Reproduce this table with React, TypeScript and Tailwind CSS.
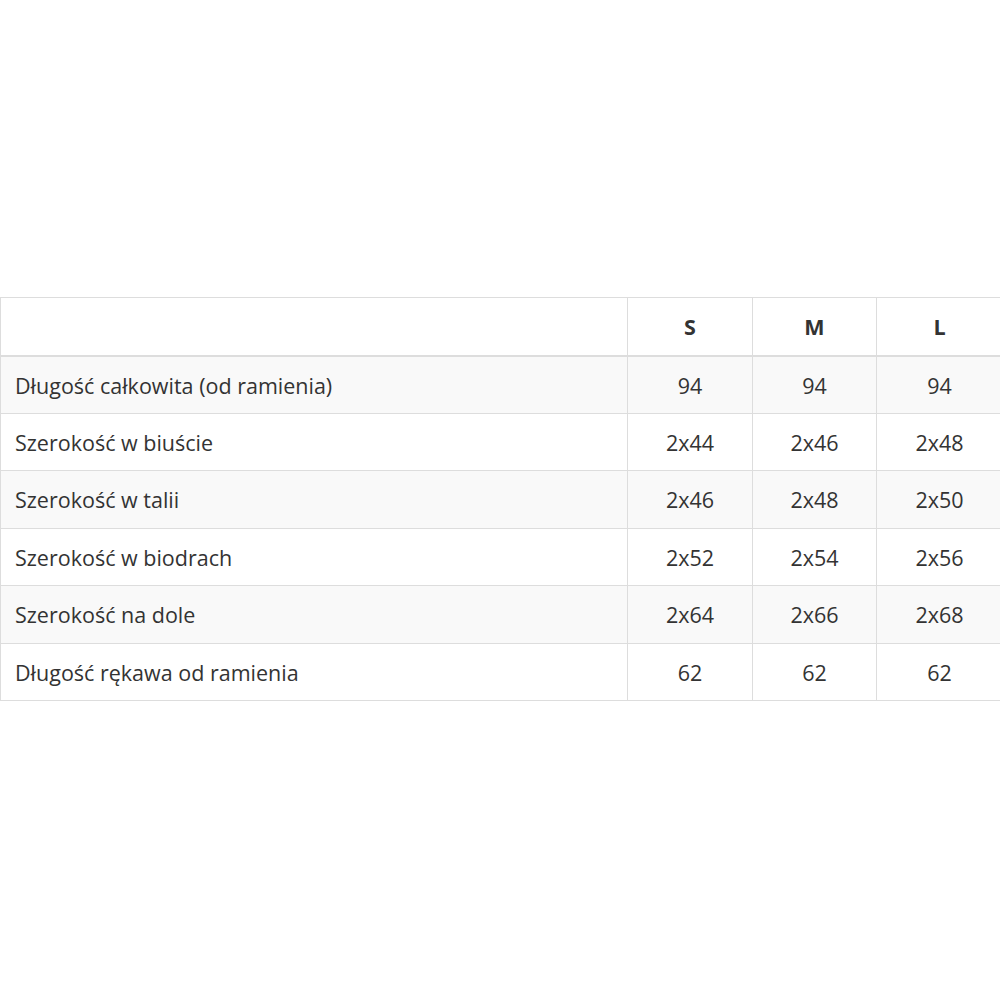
const sizes = ['S', 'M', 'L'];

const rows: [string, string[]][] = [
  ['Długość całkowita (od ramienia)', ['94', '94', '94']],
  ['Szerokość w biuście', ['2x44', '2x46', '2x48']],
  ['Szerokość w talii', ['2x46', '2x48', '2x50']],
  ['Szerokość w biodrach', ['2x52', '2x54', '2x56']],
  ['Szerokość na dole', ['2x64', '2x66', '2x68']],
  ['Długość rękawa od ramienia', ['62', '62', '62']],
];

export default function App() {
  return (
    <div className="w-[1000px] h-[1000px] bg-white overflow-hidden pt-[297px] font-['Open_Sans',sans-serif] text-[#333]">
      <table className="w-[1002px] table-fixed border-collapse text-[21.5px] leading-[28px]">
        <colgroup>
          <col className="w-[627px]" />
          <col className="w-[125px]" />
          <col className="w-[124px]" />
          <col className="w-[126px]" />
        </colgroup>
        <thead>
          <tr className="h-[58px]">
            <th className="border border-[#ddd] border-b-2" />
            {sizes.map((s) => (
              <th key={s} className="border border-[#ddd] border-b-2 font-bold text-center pt-[2px]">
                {s}
              </th>
            ))}
          </tr>
        </thead>
        <tbody>
          {rows.map(([label, vals], i) => (
            <tr key={label} className={i % 2 === 0 ? 'h-[57.5px] bg-[#f9f9f9]' : 'h-[57.5px] bg-white'}>
              <td className="border border-[#ddd] pl-[14px] pt-[2px]">{label}</td>
              {vals.map((v, j) => (
                <td key={j} className="border border-[#ddd] text-center pt-[2px]">
                  {v}
                </td>
              ))}
            </tr>
          ))}
        </tbody>
      </table>
    </div>
  );
}
